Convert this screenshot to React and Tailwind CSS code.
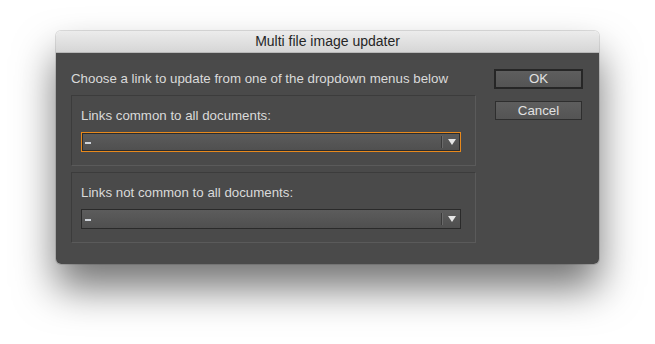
import { useState } from 'react'

function Dropdown({ focused }) {
  return (
    <div
      className={`flex h-[20px] w-[380px] items-stretch border bg-gradient-to-b from-[#5c5c5c] to-[#4f4f4f] ${
        focused ? 'border-[#e8891c] shadow-[inset_0_0_0_1px_#2c2c2c]' : 'border-[#2a2a2a]'
      }`}
    >
      <div className="flex flex-1 items-center pl-[3px]">
        <span className="mt-[1px] block h-[2px] w-[6px] bg-[#cfd4da]" />
      </div>
      <div className="my-[3px] w-[1px] bg-[#3a3a3a]" />
      <div className="my-[3px] w-[1px] bg-[#6a6a6a]" />
      <div className="flex w-[17px] items-center justify-center">
        <svg width="8" height="6" viewBox="0 0 8 6">
          <path d="M0 0 H8 L4 6 Z" fill="#e6e6e6" />
        </svg>
      </div>
    </div>
  )
}

function Group({ label, focused }) {
  return (
    <div className="flex h-[71px] w-[405px] flex-col border border-t-[#3c3c3c] border-l-[#3c3c3c] border-b-[#5a5a5a] border-r-[#5a5a5a] pl-[9px] pt-[12px]">
      <div className="h-[16px] leading-[16px]">{label}</div>
      <div className="mt-[8px]">
        <Dropdown focused={focused} />
      </div>
    </div>
  )
}

export default function App() {
  const [sel] = useState(null)
  return (
    <div
      className="h-[344px] w-[655px] overflow-hidden bg-white pl-[56px] pt-[31px] text-[13.3px]"
      style={{ fontFamily: '"Liberation Sans", Arial, sans-serif' }}
    >
      <div className="flex h-[233px] w-[543px] flex-col overflow-hidden rounded-[5px] shadow-[0_24px_40px_rgba(0,0,0,0.55),0_0_0_1px_rgba(0,0,0,0.12)]">
        <div className="flex h-[22px] items-center justify-center border-b border-[#b8b8b8] bg-gradient-to-b from-[#ececec] to-[#d6d6d6] pb-[1px] text-[14px] text-[#262626]">
          Multi file image updater
        </div>
        <div className="flex flex-1 bg-[#4a4a4a] pl-[15px] pt-[16px] text-[#dadada]">
          <div className="flex flex-col">
            <div className="mt-[2px] h-[16px] leading-[16px]">
              Choose a link to update from one of the dropdown menus below
            </div>
            <div className="mt-[8px] flex flex-col gap-[6px]">
              <Group label="Links common to all documents:" focused={sel === null} />
              <Group label="Links not common to all documents:" />
            </div>
          </div>
          <div className="ml-[18px] flex flex-col">
            <button className="flex h-[20px] w-[89px] items-center justify-center border-2 border-[#262626] bg-gradient-to-b from-[#5e5e5e] to-[#545454] text-[#e2e2e2]">
              OK
            </button>
            <button className="ml-[1px] mt-[12px] flex h-[19px] w-[87px] items-center justify-center border border-[#2e2e2e] bg-gradient-to-b from-[#5e5e5e] to-[#545454] text-[#e2e2e2]">
              Cancel
            </button>
          </div>
        </div>
      </div>
    </div>
  )
}
